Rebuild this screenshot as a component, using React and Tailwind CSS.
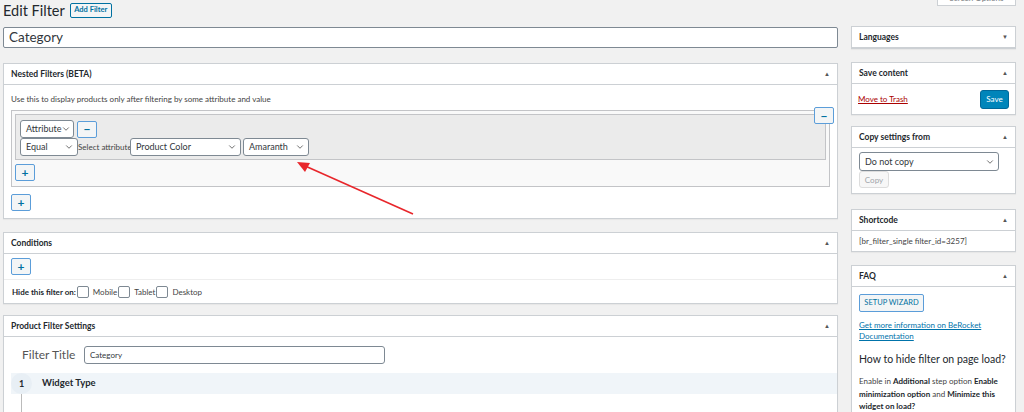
import { ChevronDown } from 'lucide-react';

function Caret({ up = true }) {
  return (
    <span className="text-[6px] text-[#555] leading-none">{up ? '▲' : '▼'}</span>
  );
}

function Postbox({ title, up = true, children, className = '' }) {
  return (
    <div className={`bg-white border border-[#ccd0d4] shadow-[0_1px_1px_rgba(0,0,0,0.04)] ${className}`}>
      <div className="h-[21px] flex items-center justify-between px-[7px] border-b border-[#ccd0d4]">
        <span className="text-[8.5px] font-bold text-[#23282d]">{title}</span>
        <Caret up={up} />
      </div>
      {children}
    </div>
  );
}

function Select({ value, className = '' }) {
  return (
    <div className={`h-[18px] bg-white border border-[#7e8993] rounded-[3px] flex items-center justify-between pl-[5px] pr-[3px] text-[9px] text-[#32373c] whitespace-nowrap ${className}`}>
      <span>{value}</span>
      <ChevronDown size={10} strokeWidth={2} className="text-[#555] shrink-0" />
    </div>
  );
}

function IconBtn({ children }) {
  return (
    <button className="w-[20px] h-[17px] flex items-center justify-center bg-[#f3f5f6] border border-[#5b9dd9] rounded-[2px] text-[#0071a1] text-[12px] font-bold leading-none">
      {children}
    </button>
  );
}

function Checkbox() {
  return <span className="inline-block w-[12px] h-[12px] border border-[#7e8993] rounded-[2px] bg-white" />;
}

export default function App() {
  return (
    <div className="h-[412px] overflow-hidden bg-[#f1f1f1] font-['Lato',sans-serif] text-[#444]">
      <div className="flex gap-[13px] pl-[3px] pr-[8px]">
        {/* Left column */}
        <div className="w-[835px] relative">
          <div className="flex items-center gap-[5px] h-[22px] pt-[1px]">
            <h1 className="text-[14.5px] text-[#23282d] leading-none">Edit Filter</h1>
            <button className="h-[15px] w-[42px] -mt-[3px] border border-[#0071a1] bg-[#f3f5f6] rounded-[2px] text-[7.5px] font-bold text-[#0071a1] leading-none whitespace-nowrap">
              Add Filter
            </button>
          </div>
          <div className="mt-[5px] h-[21px] bg-white border border-[#7e8993] rounded-[2px] flex items-center px-[5px] text-[13.5px] text-[#32373c]">
            Category
          </div>

          <Postbox title="Nested Filters (BETA)" className="mt-[15px]">
            <div className="px-[7px] pb-[7px]">
              <p className="text-[8px] text-[#444] leading-[10px] pt-[9px] pb-[6px]">
                Use this to display products only after filtering by some attribute and value
              </p>
              <div className="relative border border-[#c3c4c7] bg-[#f9f9f9] p-[3px] pb-[5px]">
                <div className="border border-[#c3c4c7] bg-[#ebebeb] px-[4px] pt-[5px] pb-[3px]">
                  <div className="flex items-center gap-[3px]">
                    <Select value="Attribute" className="w-[54px]" />
                    <IconBtn>−</IconBtn>
                  </div>
                  <div className="flex items-center">
                    <Select value="Equal" className="w-[58px]" />
                    <span className="text-[8px] text-[#444] w-[52px] whitespace-nowrap">Select attribute</span>
                    <Select value="Product Color" className="w-[111px]" />
                    <Select value="Amaranth" className="w-[66px] ml-[2px]" />
                  </div>
                </div>
                <div className="mt-[4px]">
                  <IconBtn>+</IconBtn>
                </div>
                <div className="absolute -right-[5px] -top-[4px]">
                  <IconBtn>−</IconBtn>
                </div>
              </div>
              <div className="mt-[7px]">
                <IconBtn>+</IconBtn>
              </div>
            </div>
          </Postbox>

          <svg className="absolute left-[288px] top-[155px]" width="130" height="65" viewBox="0 0 130 65">
            <line x1="122" y1="59" x2="12" y2="10" stroke="#e8262b" strokeWidth="1.6" />
            <polygon points="6,7 19,8 14,17" fill="#e8262b" />
          </svg>

          <Postbox title="Conditions" className="mt-[13px]">
            <div className="px-[7px] py-[4px] border-b border-[#eee]">
              <IconBtn>+</IconBtn>
            </div>
            <div className="flex items-center px-[8px] h-[23px] text-[8px]">
              <span className="font-bold text-[#23282d] mr-[1px]">Hide this filter on:</span>
              <Checkbox />
              <span className="ml-[4px] mr-[1px]">Mobile</span>
              <Checkbox />
              <span className="ml-[4px] mr-[1px]">Tablet</span>
              <Checkbox />
              <span className="ml-[4px]">Desktop</span>
            </div>
          </Postbox>

          <Postbox title="Product Filter Settings" className="mt-[11px] h-[200px]">
            <div className="flex items-center pl-[18px] pt-[9px]">
              <span className="text-[12px] text-[#555] w-[62px]">Filter Title</span>
              <div className="w-[301px] h-[18px] border border-[#7e8993] rounded-[3px] flex items-center px-[5px] text-[8px] text-[#32373c]">
                Category
              </div>
            </div>
            <div className="mt-[9px] ml-[7px] flex items-center h-[21px] bg-[#f0f5f9]">
              <span className="w-[21px] h-[21px] rounded-full bg-[#e8eff5] flex items-center justify-center text-[9px] font-bold text-[#23282d]">1</span>
              <span className="ml-[10px] text-[9.5px] font-bold text-[#23282d]">Widget Type</span>
            </div>
            <div className="ml-[17px] w-px h-[20px] bg-[#bbb]" />
          </Postbox>
        </div>

        {/* Right column */}
        <div className="w-[165px] flex flex-col">
          <div className="flex justify-end -mt-[12px]">
            <div className="w-[79px] h-[18px] bg-white border border-[#ccd0d4] text-[8px] text-[#72777c] flex items-end justify-center pb-[1px]">Screen Options</div>
          </div>
          <Postbox title="Languages" up={false} className="mt-[20px]" />
          <Postbox title="Save content" className="mt-[13px]">
            <div className="flex items-center justify-between px-[6px] h-[30px]">
              <span className="text-[8px] text-[#a00] underline">Move to Trash</span>
              <button className="h-[19px] w-[29px] bg-[#0085ba] border border-[#006799] rounded-[3px] text-white text-[8px]">Save</button>
            </div>
          </Postbox>
          <Postbox title="Copy settings from" className="mt-[11px]">
            <div className="px-[7px] pt-[4px] pb-[5px] flex flex-col items-start">
              <Select value="Do not copy" className="w-[140px] h-[19px]" />
              <button className="h-[17px] w-[30px] border border-[#ddd] bg-[#f7f7f7] rounded-[3px] text-[8px] text-[#a0a5aa]">Copy</button>
            </div>
          </Postbox>
          <Postbox title="Shortcode" className="mt-[15px]">
            <div className="px-[7px] h-[20px] flex items-center text-[8px] text-[#444]">
              [br_filter_single filter_id=3257]
            </div>
          </Postbox>
          <Postbox title="FAQ" className="mt-[13px] h-[160px]">
            <div className="px-[7px] pt-[7px] flex flex-col items-start">
              <button className="block h-[18px] w-[65px] border border-[#5b9dd9] bg-[#f3f5f6] rounded-[2px] text-[7.5px] text-[#0071a1] whitespace-nowrap">SETUP WIZARD</button>
              <p className="mt-[8px] text-[8px] text-[#0073aa] underline leading-[11px]">
                Get more information on BeRocket Documentation
              </p>
              <p className="mt-[10px] text-[10.5px] text-[#23282d] leading-[14px] whitespace-nowrap">How to hide filter on page load?</p>
              <p className="mt-[9px] text-[8px] text-[#444] leading-[12.5px]">
                Enable in <b className="font-bold text-[#23282d]">Additional</b> step option <b className="font-bold text-[#23282d]">Enable</b> <b className="font-bold text-[#23282d]">minimization option</b> and <b className="font-bold text-[#23282d]">Minimize this widget on load?</b>
              </p>
            </div>
          </Postbox>
        </div>
      </div>
    </div>
  );
}
